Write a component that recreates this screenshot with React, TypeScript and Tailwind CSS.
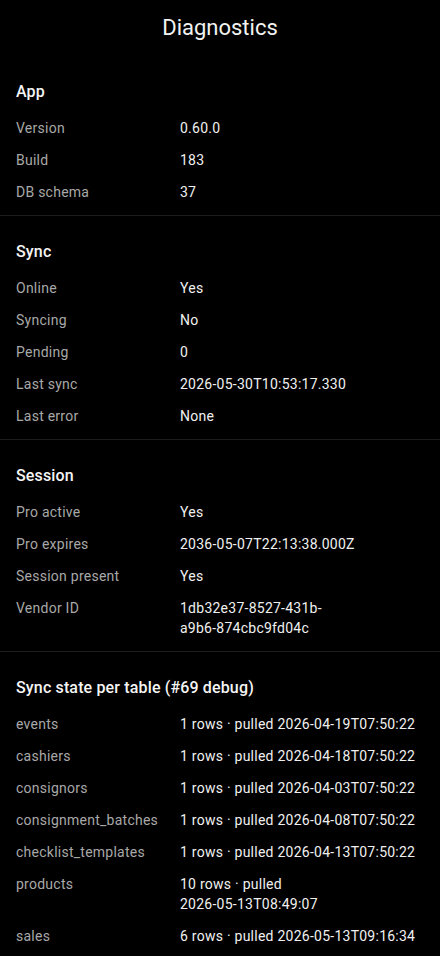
import React from 'react'

type Row = { label: string; value: string }
type Section = { title: string; rows: Row[] }

const sections: Section[] = [
  {
    title: 'App',
    rows: [
      { label: 'Version', value: '0.60.0' },
      { label: 'Build', value: '183' },
      { label: 'DB schema', value: '37' },
    ],
  },
  {
    title: 'Sync',
    rows: [
      { label: 'Online', value: 'Yes' },
      { label: 'Syncing', value: 'No' },
      { label: 'Pending', value: '0' },
      { label: 'Last sync', value: '2026-05-30T10:53:17.330' },
      { label: 'Last error', value: 'None' },
    ],
  },
  {
    title: 'Session',
    rows: [
      { label: 'Pro active', value: 'Yes' },
      { label: 'Pro expires', value: '2036-05-07T22:13:38.000Z' },
      { label: 'Session present', value: 'Yes' },
      // wraps after "431b-" like the native text layout does
      { label: 'Vendor ID', value: '1db32e37-8527-431b-\na9b6-874cbc9fd04c' },
    ],
  },
  {
    title: 'Sync state per table (#69 debug)',
    rows: [
      { label: 'events', value: '1 rows · pulled 2026-04-19T07:50:22' },
      { label: 'cashiers', value: '1 rows · pulled 2026-04-18T07:50:22' },
      { label: 'consignors', value: '1 rows · pulled 2026-04-03T07:50:22' },
      { label: 'consignment_batches', value: '1 rows · pulled 2026-04-08T07:50:22' },
      { label: 'checklist_templates', value: '1 rows · pulled 2026-04-13T07:50:22' },
      { label: 'products', value: '10 rows · pulled\n2026-05-13T08:49:07' },
      { label: 'sales', value: '6 rows · pulled 2026-05-13T09:16:34' },
    ],
  },
]

export default function App() {
  return (
    <div className="min-h-[956px] w-[440px] bg-black text-white font-['Roboto',sans-serif] overflow-hidden">
      <div className="h-14 flex items-center justify-center">
        <h1 className="text-[22px] leading-7 text-[#f2f2f2]">Diagnostics</h1>
      </div>

      {sections.map((section, i) => (
        <div key={section.title} className={i > 0 ? 'border-t border-[#1c1c1c]' : ''}>
          <div className="px-4 pt-6 pb-[7px]">
            <h2 className="text-base leading-6 font-medium tracking-[0.15px] text-[#f5f5f5] mb-2">
              {section.title}
            </h2>
            {section.rows.map((row) => (
              <div key={row.label} className="flex py-1.5 text-sm leading-5 tracking-[0.25px]">
                <div className="w-[164px] shrink-0 text-[#a8a8a8]">{row.label}</div>
                <div className="w-[244px] text-[#f0f0f0] whitespace-pre-line">{row.value}</div>
              </div>
            ))}
          </div>
        </div>
      ))}
    </div>
  )
}
